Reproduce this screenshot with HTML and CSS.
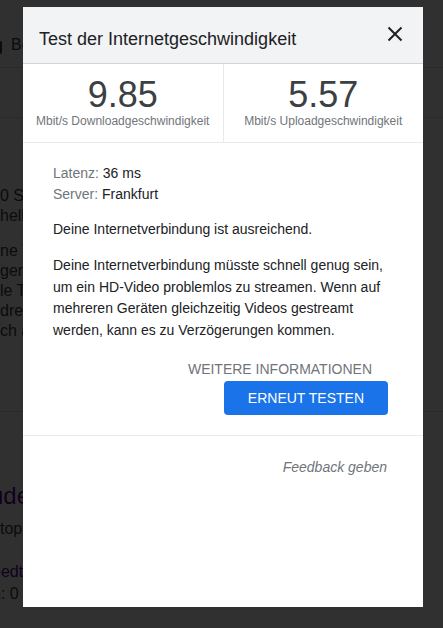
FILE: index.html
```html
<!DOCTYPE html>
<html lang="de">
<head>
    <meta charset="UTF-8">
    <meta name="viewport" content="width=device-width, initial-scale=1.0">
    <title>Test der Internetgeschwindigkeit</title>
    <link rel="stylesheet" href="styles.css">
</head>
<body>
    <!-- Page behind the dialog -->
    <div class="page">
        <div class="page-top">
            <span class="box-icon"></span>
            <span>Bewertung</span>
        </div>
        <div class="page-band"></div>
        <div class="page-text">
            <p>0 Sekunden durchgeführt.<br>hellere Verbindung</p>
            <p>ne Verbindung wird<br>gemessen, indem<br>le Testdaten an<br>dresse gesendet<br>ch ausgewertet.</p>
        </div>
        <div class="page-result">
            <h3>uden Speedtest</h3>
            <div>ktop</div>
            <div class="page-link">eedtest</div>
            <div>h: 0</div>
        </div>
    </div>

    <div class="overlay"></div>

    <div class="dialog">
        <header class="dialog-head">
            <h1>Test der Internetgeschwindigkeit</h1>
            <button class="close" aria-label="Schließen">
                <svg width="24" height="24" viewBox="0 0 24 24">
                    <path d="M5.5 5.5l13 13M18.5 5.5l-13 13" stroke="#202124" stroke-width="2" fill="none"/>
                </svg>
            </button>
        </header>

        <div class="stats">
            <div class="stat">
                <div class="stat-value">9.85</div>
                <div class="stat-label">Mbit/s Downloadgeschwindigkeit</div>
            </div>
            <div class="stat">
                <div class="stat-value">5.57</div>
                <div class="stat-label">Mbit/s Uploadgeschwindigkeit</div>
            </div>
        </div>

        <div class="dialog-body">
            <div class="meta">
                <div><span class="muted">Latenz:</span> 36 ms</div>
                <div><span class="muted">Server:</span> Frankfurt</div>
            </div>
            <p class="verdict">Deine Internetverbindung ist ausreichend.</p>
            <p class="detail">Deine Internetverbindung müsste schnell genug sein, um ein HD-Video problemlos zu streamen. Wenn auf mehreren Geräten gleichzeitig Videos gestreamt werden, kann es zu Verzögerungen kommen.</p>
            <div class="actions">
                <button class="link-btn">Weitere Informationen</button>
                <button class="primary-btn">Erneut testen</button>
            </div>
        </div>

        <div class="dialog-foot">
            <a href="#" class="feedback">Feedback geben</a>
        </div>
    </div>
</body>
</html>
```

FILE: styles.css
```css
/* General Styles */
body {
    font-family: "Liberation Sans", Arial, sans-serif;
    margin: 0;
    padding: 0;
    background: #fff;
    color: #202124;
    height: 628px;
    overflow: hidden;
}

/* Page behind the dialog */
.page {
    font-size: 16px;
    color: #3c4043;
}

.page-top {
    height: 68px;
    border-bottom: 1px solid #dadce0;
    display: flex;
    align-items: flex-end;
    gap: 9px;
    padding-bottom: 13px;
    box-sizing: border-box;
    margin-left: -10px;
}

.box-icon {
    width: 12px;
    height: 13px;
    border: 2px solid #3c4043;
    border-radius: 2px;
    box-sizing: border-box;
}

.page-band {
    height: 49px;
    border-bottom: 1px solid #dadce0;
}

.page-text {
    height: 294px;
    border-bottom: 1px solid #dadce0;
    padding-top: 68px;
    box-sizing: border-box;
}

.page-text p {
    margin: 0 0 15px;
    line-height: 20px;
}

.page-result {
    padding-top: 70px;
}

.page-result h3 {
    margin: 0 0 8px;
    font-size: 24px;
    font-weight: normal;
    color: #660099;
    margin-left: -10px;
}

.page-result div {
    line-height: 22px;
    margin-left: -8px;
}

.page-result .page-link {
    color: #660099;
    margin-top: 21px;
}

.overlay {
    position: fixed;
    inset: 0;
    background: rgba(0, 0, 0, 0.81);
}

/* Dialog */
.dialog {
    position: fixed;
    left: 23px;
    top: 7px;
    width: 400px;
    height: 600px;
    background: #fff;
}

.dialog-head {
    height: 57px;
    box-sizing: border-box;
    background: #f1f3f4;
    border-bottom: 1px solid #d3d4d6;
    display: flex;
    align-items: center;
    justify-content: space-between;
    padding: 0 16px;
}

.dialog-head h1 {
    margin: 0;
    padding-top: 7px;
    font-size: 18px;
    font-weight: normal;
    line-height: 22px;
    color: #202124;
}

.close {
    width: 24px;
    height: 24px;
    padding: 0;
    border: none;
    background: none;
    margin-bottom: 3px;
    cursor: pointer;
}

.close svg {
    display: block;
}

.stats {
    display: flex;
    border-bottom: 1px solid #e8eaed;
}

.stat {
    flex: 1 1 50%;
    text-align: center;
    padding: 12px 0 14px;
}

.stat + .stat {
    border-left: 1px solid #e8eaed;
}

.stat-value {
    font-size: 36px;
    line-height: 38px;
    color: #3c4043;
}

.stat-label {
    font-size: 12px;
    line-height: 14px;
    color: #70757a;
}

.dialog-body {
    padding: 20px 35px 20px 30px;
    font-size: 14px;
    border-bottom: 1px solid #e8eaed;
}

.meta {
    line-height: 20.5px;
}

.muted {
    color: #70757a;
}

.verdict {
    margin: 15px 0 0;
    line-height: 20px;
}

.detail {
    margin: 16px 0 0;
    line-height: 21.7px;
}

.actions {
    display: flex;
    flex-direction: column;
    align-items: flex-end;
    margin-top: 17px;
}

.link-btn, .primary-btn {
    font-family: inherit;
    font-size: 14px;
    text-transform: uppercase;
    border: none;
    cursor: pointer;
}

.link-btn {
    background: none;
    color: #70757a;
    padding: 0 16px;
    line-height: 20px;
}

.primary-btn {
    margin-top: 2px;
    height: 34px;
    padding: 0 24px;
    background: #1a73e8;
    color: #fff;
    border-radius: 4px;
}

.dialog-foot {
    padding: 21px 36px 0 30px;
    text-align: right;
    line-height: 20px;
}

.feedback {
    font-size: 14px;
    font-style: italic;
    color: #70757a;
    text-decoration: none;
}
```
